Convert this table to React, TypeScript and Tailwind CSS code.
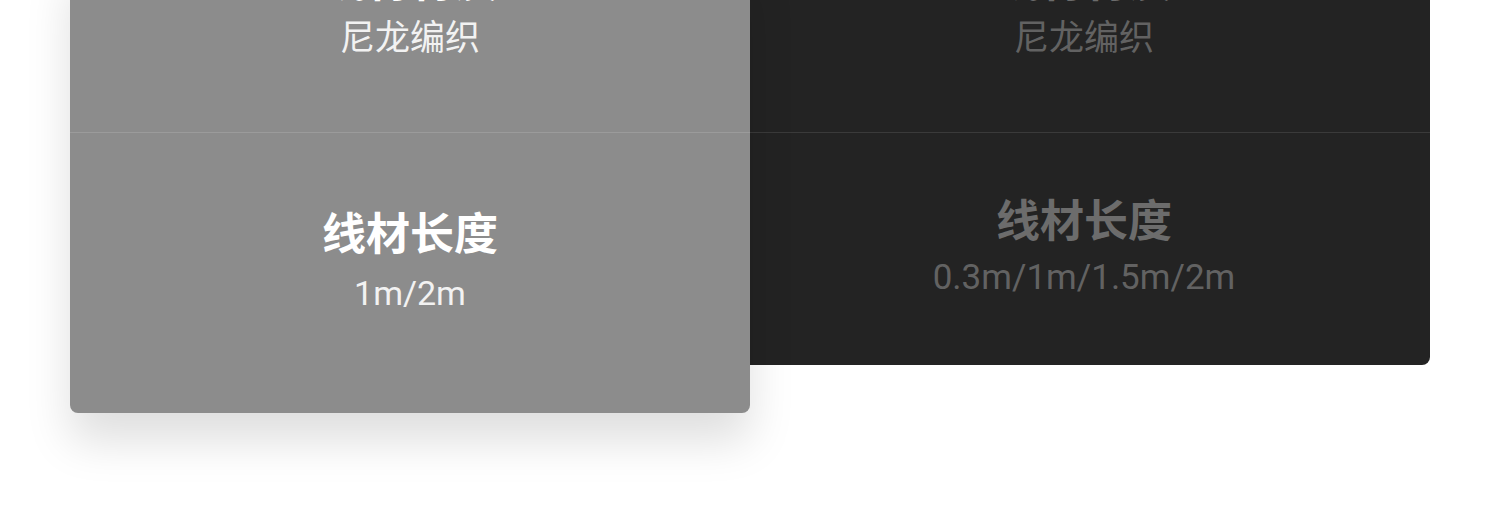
import React from "react";

interface Spec {
  title: string;
  value: string;
}

const leftSpecs: Spec[] = [
  { title: "线材材质", value: "尼龙编织" },
  { title: "线材长度", value: "1m/2m" },
];

const rightSpecs: Spec[] = [
  { title: "线材材质", value: "尼龙编织" },
  { title: "线材长度", value: "0.3m/1m/1.5m/2m" },
];

const App = () => {
  return (
    <div className="w-[1500px] h-[525px] bg-white overflow-hidden font-['Roboto','Noto_Sans_CJK_SC',sans-serif]">
      <div className="flex items-start pl-[70px] -mt-[42px]">
        {/* HIGHLIGHTED CARD */}
        <div className="relative z-10 w-[680px] bg-[#8c8c8c] rounded-b-[8px] shadow-[0_28px_45px_rgba(0,0,0,0.13)] text-white">
          <div className="flex flex-col items-center pb-[73px] border-b border-[#9b9b9b]">
            <p className="text-[44px] leading-[48px] font-bold">{leftSpecs[0].title}</p>
            <p className="mt-[13px] text-[35px] leading-[40px] text-[#f2f2f2]">{leftSpecs[0].value}</p>
          </div>
          <div className="flex flex-col items-center pt-[78px] pb-[100px]">
            <p className="text-[44px] leading-[48px] font-bold">{leftSpecs[1].title}</p>
            <p className="mt-[14px] text-[34px] leading-[40px] text-[#f2f2f2]">{leftSpecs[1].value}</p>
          </div>
        </div>

        {/* DARK CARD */}
        <div className="-ml-[12px] w-[692px] bg-[#232323] rounded-br-[8px] text-[#6c6c6c]">
          <div className="flex flex-col items-center pb-[73px] border-b border-[#3a3a3a]">
            <p className="text-[44px] leading-[48px] font-bold">{rightSpecs[0].title}</p>
            <p className="mt-[13px] text-[35px] leading-[40px] text-[#626262]">{rightSpecs[0].value}</p>
          </div>
          <div className="flex flex-col items-center pt-[65px] pb-[67px]">
            <p className="text-[44px] leading-[48px] font-bold">{rightSpecs[1].title}</p>
            <p className="mt-[12px] text-[35px] leading-[40px] text-[#626262]">{rightSpecs[1].value}</p>
          </div>
        </div>
      </div>
    </div>
  );
};

export default App;
